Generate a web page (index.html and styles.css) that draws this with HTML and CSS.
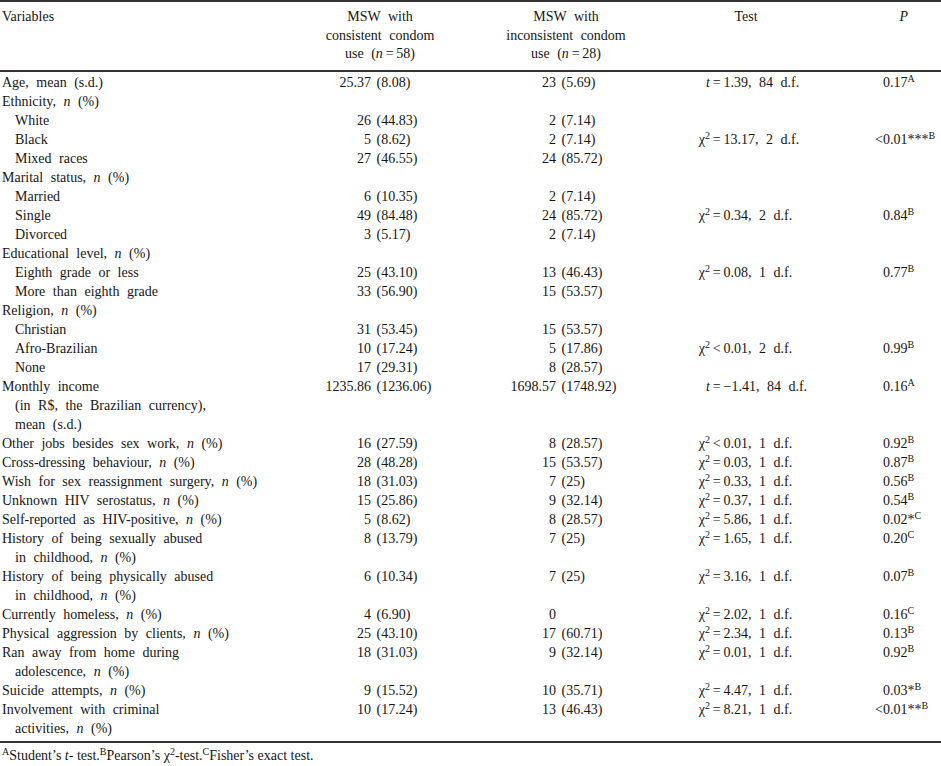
FILE: index.html
```html
<!DOCTYPE html>
<html lang="en">
<head>
<meta charset="utf-8">
<title>Table</title>
<link rel="stylesheet" href="styles.css">
</head>
<body>
<table class="tbl">
<colgroup><col class="w1"><col class="w2"><col class="w3"><col class="w4"><col class="w5"></colgroup>
<thead>
<tr>
<th class="h-lbl">Variables</th>
<th class="h-c">MSW with<br>consistent condom<br>use (<i>n</i>&#8201;=&#8201;58)</th>
<th class="h-c">MSW with<br>inconsistent condom<br>use (<i>n</i>&#8201;=&#8201;28)</th>
<th class="h-c">Test</th>
<th class="h-p"><i>P</i></th>
</tr>
</thead>
<tbody>
<tr class="first"><td class="lbl">Age, mean (s.d.)</td><td class="c2"><span class="n">25.37</span> (8.08)</td><td class="c3"><span class="n">23</span> (5.69)</td><td class="ts"><span class="k"><i>t</i></span>&#8201;=&#8201;1.39, 84 d.f.</td><td class="pv"><span class="lt"></span>0.17<sup>A</sup></td></tr>
<tr><td class="lbl">Ethnicity, <i>n</i> (%)</td><td></td><td></td><td></td><td></td></tr>
<tr><td class="lbl sub">White</td><td class="c2"><span class="n">26</span> (44.83)</td><td class="c3"><span class="n">2</span> (7.14)</td><td></td><td></td></tr>
<tr><td class="lbl sub">Black</td><td class="c2"><span class="n">5</span> (8.62)</td><td class="c3"><span class="n">2</span> (7.14)</td><td class="ts"><span class="k">χ<sup>2</sup></span>&#8201;=&#8201;13.17, 2 d.f.</td><td class="pv"><span class="lt">&lt;</span>0.01***<sup>B</sup></td></tr>
<tr><td class="lbl sub">Mixed races</td><td class="c2"><span class="n">27</span> (46.55)</td><td class="c3"><span class="n">24</span> (85.72)</td><td></td><td></td></tr>
<tr><td class="lbl">Marital status, <i>n</i> (%)</td><td></td><td></td><td></td><td></td></tr>
<tr><td class="lbl sub">Married</td><td class="c2"><span class="n">6</span> (10.35)</td><td class="c3"><span class="n">2</span> (7.14)</td><td></td><td></td></tr>
<tr><td class="lbl sub">Single</td><td class="c2"><span class="n">49</span> (84.48)</td><td class="c3"><span class="n">24</span> (85.72)</td><td class="ts"><span class="k">χ<sup>2</sup></span>&#8201;=&#8201;0.34, 2 d.f.</td><td class="pv"><span class="lt"></span>0.84<sup>B</sup></td></tr>
<tr><td class="lbl sub">Divorced</td><td class="c2"><span class="n">3</span> (5.17)</td><td class="c3"><span class="n">2</span> (7.14)</td><td></td><td></td></tr>
<tr><td class="lbl">Educational level, <i>n</i> (%)</td><td></td><td></td><td></td><td></td></tr>
<tr><td class="lbl sub">Eighth grade or less</td><td class="c2"><span class="n">25</span> (43.10)</td><td class="c3"><span class="n">13</span> (46.43)</td><td class="ts"><span class="k">χ<sup>2</sup></span>&#8201;=&#8201;0.08, 1 d.f.</td><td class="pv"><span class="lt"></span>0.77<sup>B</sup></td></tr>
<tr><td class="lbl sub">More than eighth grade</td><td class="c2"><span class="n">33</span> (56.90)</td><td class="c3"><span class="n">15</span> (53.57)</td><td></td><td></td></tr>
<tr><td class="lbl">Religion, <i>n</i> (%)</td><td></td><td></td><td></td><td></td></tr>
<tr><td class="lbl sub">Christian</td><td class="c2"><span class="n">31</span> (53.45)</td><td class="c3"><span class="n">15</span> (53.57)</td><td></td><td></td></tr>
<tr><td class="lbl sub">Afro-Brazilian</td><td class="c2"><span class="n">10</span> (17.24)</td><td class="c3"><span class="n">5</span> (17.86)</td><td class="ts"><span class="k">χ<sup>2</sup></span>&#8201;&lt;&#8201;0.01, 2 d.f.</td><td class="pv"><span class="lt"></span>0.99<sup>B</sup></td></tr>
<tr><td class="lbl sub">None</td><td class="c2"><span class="n">17</span> (29.31)</td><td class="c3"><span class="n">8</span> (28.57)</td><td></td><td></td></tr>
<tr><td class="lbl wrap">Monthly income<br>(in R$, the Brazilian currency),<br>mean (s.d.)</td><td class="c2"><span class="n">1235.86</span> (1236.06)</td><td class="c3"><span class="n">1698.57</span> (1748.92)</td><td class="ts"><span class="k"><i>t</i></span>&#8201;=&#8201;−1.41, 84 d.f.</td><td class="pv"><span class="lt"></span>0.16<sup>A</sup></td></tr>
<tr><td class="lbl">Other jobs besides sex work, <i>n</i> (%)</td><td class="c2"><span class="n">16</span> (27.59)</td><td class="c3"><span class="n">8</span> (28.57)</td><td class="ts"><span class="k">χ<sup>2</sup></span>&#8201;&lt;&#8201;0.01, 1 d.f.</td><td class="pv"><span class="lt"></span>0.92<sup>B</sup></td></tr>
<tr><td class="lbl">Cross-dressing behaviour, <i>n</i> (%)</td><td class="c2"><span class="n">28</span> (48.28)</td><td class="c3"><span class="n">15</span> (53.57)</td><td class="ts"><span class="k">χ<sup>2</sup></span>&#8201;=&#8201;0.03, 1 d.f.</td><td class="pv"><span class="lt"></span>0.87<sup>B</sup></td></tr>
<tr><td class="lbl">Wish for sex reassignment surgery, <i>n</i> (%)</td><td class="c2"><span class="n">18</span> (31.03)</td><td class="c3"><span class="n">7</span> (25)</td><td class="ts"><span class="k">χ<sup>2</sup></span>&#8201;=&#8201;0.33, 1 d.f.</td><td class="pv"><span class="lt"></span>0.56<sup>B</sup></td></tr>
<tr><td class="lbl">Unknown HIV serostatus, <i>n</i> (%)</td><td class="c2"><span class="n">15</span> (25.86)</td><td class="c3"><span class="n">9</span> (32.14)</td><td class="ts"><span class="k">χ<sup>2</sup></span>&#8201;=&#8201;0.37, 1 d.f.</td><td class="pv"><span class="lt"></span>0.54<sup>B</sup></td></tr>
<tr><td class="lbl">Self-reported as HIV-positive, <i>n</i> (%)</td><td class="c2"><span class="n">5</span> (8.62)</td><td class="c3"><span class="n">8</span> (28.57)</td><td class="ts"><span class="k">χ<sup>2</sup></span>&#8201;=&#8201;5.86, 1 d.f.</td><td class="pv"><span class="lt"></span>0.02*<sup>C</sup></td></tr>
<tr><td class="lbl wrap">History of being sexually abused<br>in childhood, <i>n</i> (%)</td><td class="c2"><span class="n">8</span> (13.79)</td><td class="c3"><span class="n">7</span> (25)</td><td class="ts"><span class="k">χ<sup>2</sup></span>&#8201;=&#8201;1.65, 1 d.f.</td><td class="pv"><span class="lt"></span>0.20<sup>C</sup></td></tr>
<tr><td class="lbl wrap">History of being physically abused<br>in childhood, <i>n</i> (%)</td><td class="c2"><span class="n">6</span> (10.34)</td><td class="c3"><span class="n">7</span> (25)</td><td class="ts"><span class="k">χ<sup>2</sup></span>&#8201;=&#8201;3.16, 1 d.f.</td><td class="pv"><span class="lt"></span>0.07<sup>B</sup></td></tr>
<tr><td class="lbl">Currently homeless, <i>n</i> (%)</td><td class="c2"><span class="n">4</span> (6.90)</td><td class="c3"><span class="n">0</span></td><td class="ts"><span class="k">χ<sup>2</sup></span>&#8201;=&#8201;2.02, 1 d.f.</td><td class="pv"><span class="lt"></span>0.16<sup>C</sup></td></tr>
<tr><td class="lbl">Physical aggression by clients, <i>n</i> (%)</td><td class="c2"><span class="n">25</span> (43.10)</td><td class="c3"><span class="n">17</span> (60.71)</td><td class="ts"><span class="k">χ<sup>2</sup></span>&#8201;=&#8201;2.34, 1 d.f.</td><td class="pv"><span class="lt"></span>0.13<sup>B</sup></td></tr>
<tr><td class="lbl wrap">Ran away from home during<br>adolescence, <i>n</i> (%)</td><td class="c2"><span class="n">18</span> (31.03)</td><td class="c3"><span class="n">9</span> (32.14)</td><td class="ts"><span class="k">χ<sup>2</sup></span>&#8201;=&#8201;0.01, 1 d.f.</td><td class="pv"><span class="lt"></span>0.92<sup>B</sup></td></tr>
<tr><td class="lbl">Suicide attempts, <i>n</i> (%)</td><td class="c2"><span class="n">9</span> (15.52)</td><td class="c3"><span class="n">10</span> (35.71)</td><td class="ts"><span class="k">χ<sup>2</sup></span>&#8201;=&#8201;4.47, 1 d.f.</td><td class="pv"><span class="lt"></span>0.03*<sup>B</sup></td></tr>
<tr class="last"><td class="lbl wrap">Involvement with criminal<br>activities, <i>n</i> (%)</td><td class="c2"><span class="n">10</span> (17.24)</td><td class="c3"><span class="n">13</span> (46.43)</td><td class="ts"><span class="k">χ<sup>2</sup></span>&#8201;=&#8201;8.21, 1 d.f.</td><td class="pv"><span class="lt">&lt;</span>0.01**<sup>B</sup></td></tr>
</tbody>
<tfoot>
<tr><td class="foot" colspan="5"><sup>A</sup>Student’s <i>t</i>- test.<sup>B</sup>Pearson’s χ<sup>2</sup>-test.<sup>C</sup>Fisher’s exact test.</td></tr>
</tfoot>
</table>
</body>
</html>
```
FILE: styles.css
```css
* { box-sizing: border-box; }
html, body { background: #ffffff; }
body {
  margin: 0;
  color: #161616;
  font-family: "Liberation Serif", "Times New Roman", serif;
  font-size: 14px;
  line-height: 19px;
  word-spacing: 4px;
}
.tbl {
  width: 941px;
  border-collapse: separate;
  border-spacing: 0;
  table-layout: fixed;
}
.w1 { width: 300px; }
.w2 { width: 160px; }
.w3 { width: 212px; }
.w4 { width: 148px; }
.w5 { width: 121px; }

th, td {
  padding: 0;
  vertical-align: top;
  white-space: nowrap;
  font-weight: normal;
  text-align: left;
}
thead th {
  border-top: 2px solid #333;
  border-bottom: 2px solid #333;
  padding-top: 6px;
  padding-bottom: 6px;
  line-height: 18.5px;
}
.h-lbl { padding-left: 2px; }
.h-c { text-align: center; }
.h-p { text-align: right; padding-right: 33px; }

.first td { padding-top: 1px; }
.last td { padding-bottom: 3px; border-bottom: 2px solid #333; }

.lbl { padding-left: 2px; }
.lbl.sub { padding-left: 15px; }
.lbl.wrap { padding-left: 15px; text-indent: -13px; }

.n {
  display: inline-block;
  width: 50px;
  text-align: right;
}
.c2 { padding-left: 21px; word-spacing: 2px; }
.c3 { padding-left: 46px; word-spacing: 2px; }

.ts { padding-left: 18px; }
.k {
  display: inline-block;
  width: 20px;
  text-align: right;
}
.pv { padding-left: 53px; }
.lt {
  display: inline-block;
  width: 10px;
  text-align: right;
}

sup {
  font-size: 10px;
  line-height: 0;
  vertical-align: 5px;
}

.foot { padding-top: 3px; padding-left: 2px; word-spacing: 0; }
```
